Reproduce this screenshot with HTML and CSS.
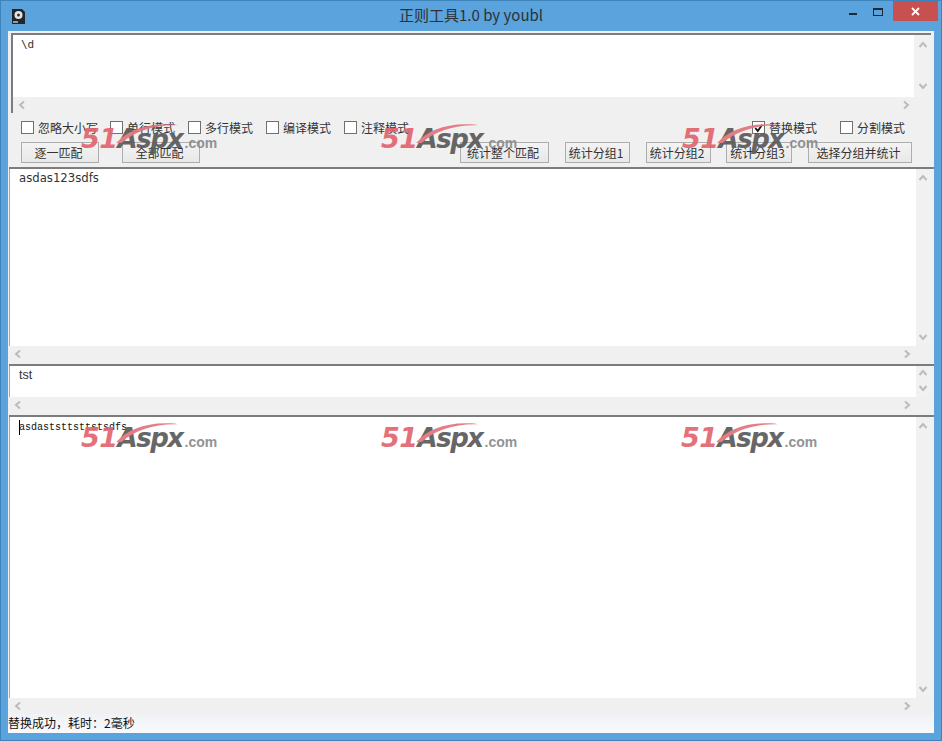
FILE: index.html
```html
<!DOCTYPE html>
<html lang="zh">
<head>
<meta charset="utf-8">
<title>正则工具1.0 by youbl</title>
<link rel="stylesheet" href="styles.css">
</head>
<body>
<svg class="defs" width="0" height="0" aria-hidden="true">
  <defs>
    <symbol id="chev" viewBox="0 0 10 10"><path d="M3 1.5 L7 5 L3 8.5" fill="none" stroke="#bcbcbc" stroke-width="2"/></symbol>
    <symbol id="sw" viewBox="0 0 80 26"><path d="M0 26C14 10 40 -1 76 2L80 3C50 2 24 11 7 26z" fill="#e2747c"/></symbol>
  </defs>
</svg>
<div class="window">
  <header class="titlebar">
    <svg class="appicon" viewBox="0 0 13 16"><path d="M0 1h10l3 3v12H0z" fill="#20262c"/><circle cx="6.5" cy="7" r="4" fill="#e4e4e4"/><circle cx="6.5" cy="7" r="1.5" fill="#333"/><rect x="1" y="13" width="5" height="2" fill="#999"/></svg>
    <h1 class="title">正则工具1.0 by youbl</h1>
    <div class="controls">
      <span class="min"></span>
      <span class="max"></span>
      <span class="close"><svg viewBox="0 0 9 9" width="9" height="9"><path d="M1 1l7 7M8 1l-7 7" stroke="#fff" stroke-width="1.8"/></svg></span>
    </div>
  </header>

  <main class="client">
    <section class="box box-regex">
      <div class="text mono-ish">\d</div>
      <div class="vbar">
        <svg class="arrow up"><use href="#chev"/></svg>
        <svg class="arrow down"><use href="#chev"/></svg>
      </div>
      <div class="hbar">
        <svg class="arrow left"><use href="#chev"/></svg>
        <svg class="arrow right"><use href="#chev"/></svg>
      </div>
    </section>

    <section class="options">
      <label class="opt o1"><i class="check"></i>忽略大小写</label>
      <label class="opt o2"><i class="check"></i>单行模式</label>
      <label class="opt o3"><i class="check"></i>多行模式</label>
      <label class="opt o4"><i class="check"></i>编译模式</label>
      <label class="opt o5"><i class="check"></i>注释模式</label>
      <label class="opt o6"><i class="check checked"><svg viewBox="0 0 12 12" width="12" height="12"><path d="M2.5 6l2.7 3.2L10 2.5" fill="none" stroke="#111" stroke-width="2"/></svg></i>替换模式</label>
      <label class="opt o7"><i class="check"></i>分割模式</label>
    </section>

    <section class="buttons">
      <button class="btn b1">逐一匹配</button>
      <button class="btn b2">全部匹配</button>
      <button class="btn b3">统计整个匹配</button>
      <button class="btn b4">统计分组1</button>
      <button class="btn b5">统计分组2</button>
      <button class="btn b6">统计分组3</button>
      <button class="btn b7">选择分组并统计</button>
    </section>

    <section class="box box-input">
      <div class="text sans-wide">asdas123sdfs</div>
      <div class="vbar">
        <svg class="arrow up"><use href="#chev"/></svg>
        <svg class="arrow down"><use href="#chev"/></svg>
      </div>
      <div class="hbar">
        <svg class="arrow left"><use href="#chev"/></svg>
        <svg class="arrow right"><use href="#chev"/></svg>
      </div>
    </section>

    <section class="box box-replace">
      <div class="text sans-plain">tst</div>
      <div class="vbar">
        <svg class="arrow up"><use href="#chev"/></svg>
        <svg class="arrow down"><use href="#chev"/></svg>
      </div>
      <div class="hbar">
        <svg class="arrow left"><use href="#chev"/></svg>
        <svg class="arrow right"><use href="#chev"/></svg>
      </div>
    </section>

    <section class="box box-result">
      <div class="text mono"><span class="caret"></span>asdaststtsttstsdfs</div>
      <div class="vbar">
        <svg class="arrow up"><use href="#chev"/></svg>
        <svg class="arrow down"><use href="#chev"/></svg>
      </div>
      <div class="hbar">
        <svg class="arrow left"><use href="#chev"/></svg>
        <svg class="arrow right"><use href="#chev"/></svg>
      </div>
    </section>

    <footer class="status">替换成功，耗时：2毫秒</footer>
  </main>

  <div class="wm w1"><svg class="swoosh"><use href="#sw"/></svg><b class="n">51</b><b class="a">Aspx</b><b class="c">.com</b></div>
  <div class="wm w2"><svg class="swoosh"><use href="#sw"/></svg><b class="n">51</b><b class="a">Aspx</b><b class="c">.com</b></div>
  <div class="wm w3"><svg class="swoosh"><use href="#sw"/></svg><b class="n">51</b><b class="a">Aspx</b><b class="c">.com</b></div>
  <div class="wm w4"><svg class="swoosh"><use href="#sw"/></svg><b class="n">51</b><b class="a">Aspx</b><b class="c">.com</b></div>
  <div class="wm w5"><svg class="swoosh"><use href="#sw"/></svg><b class="n">51</b><b class="a">Aspx</b><b class="c">.com</b></div>
  <div class="wm w6"><svg class="swoosh"><use href="#sw"/></svg><b class="n">51</b><b class="a">Aspx</b><b class="c">.com</b></div>
</div>
</body>
</html>
```
FILE: styles.css
```css
* { box-sizing: border-box; }
html, body { margin: 0; padding: 0; }
body { width: 942px; height: 741px; overflow: hidden; font-family: "Noto Sans CJK SC", "Liberation Sans", sans-serif; font-size: 12px; color: #222; }
.defs { position: absolute; }

.window { position: relative; width: 942px; height: 741px; background: #5ba3dc; border: 1px solid #3d84bd; display: flex; flex-direction: column; padding: 0 7px 7px 7px; }

.titlebar { height: 30px; flex: none; display: flex; align-items: flex-start; position: relative; }
.appicon { width: 13px; height: 16px; margin: 7px 0 0 4px; flex: none; }
.title { position: absolute; left: 0; right: 0; top: 4px; margin: 0; text-align: center; font-size: 15px; font-weight: 400; line-height: 20px; color: #2c3238; font-family: "Noto Sans CJK SC", "Liberation Sans", sans-serif; }
.controls { margin-left: auto; position: relative; width: 95px; height: 20px; margin-right: -4px; }
.min { position: absolute; left: 6px; top: 12px; width: 8px; height: 2px; background: #1d2a36; }
.max { position: absolute; left: 30px; top: 7px; width: 10px; height: 8px; border: 1px solid #1d2a36; border-top-width: 2px; }
.close { position: absolute; left: 50px; top: 0; width: 45px; height: 20px; background: #c75050; display: flex; align-items: center; justify-content: center; }

.client { flex: 1; display: flex; flex-direction: column; background: #f0f0f0; min-height: 0; }

.box { display: grid; grid-template-columns: 1fr 18px; grid-template-rows: 1fr 18px; background: #f0f0f0; border-top: 2px solid #7c7c7c; flex: none; }
.text { background: #fff; overflow: hidden; white-space: nowrap; grid-column: 1; grid-row: 1; }
.vbar { grid-column: 2; grid-row: 1; display: flex; flex-direction: column; justify-content: space-between; align-items: center; padding: 4px 4px 4px 0; background: #f1f1f1; }
.hbar { grid-column: 1 / span 2; grid-row: 2; display: flex; justify-content: space-between; align-items: center; padding: 0 22px 3px 4px; background: #f0f0f0; }
.arrow { width: 10px; height: 10px; flex: none; display: block; }
.arrow.up { transform: rotate(-90deg); }
.arrow.down { transform: rotate(90deg); }
.arrow.left { transform: rotate(180deg); }

.box-regex { height: 80px; margin: 2px 3px 0 3px; border-left: 2px solid #7c7c7c; grid-template-columns: 1fr 17px; grid-template-rows: 1fr 16px; }
.box-regex .vbar { padding: 5px 0 6px; }
.box-regex .hbar { padding: 0 20px 1px 4px; }
.box-input { height: 197px; margin-left: 1px; }
.box-replace { height: 51px; margin-left: 1px; }
.box-result { height: 299px; margin-left: 1px; grid-template-rows: 1fr 16px; }
.box-replace .vbar { padding-top: 2px; }
.box-result .hbar { padding-bottom: 1px; }
.box-input .text, .box-replace .text, .box-result .text { border-left: 1px solid #a8a8a8; }

.mono-ish { font-family: "DejaVu Sans Mono", monospace; font-size: 11px; line-height: 14px; padding: 3px 0 0 8px; color: #333; }
.sans-wide { font-family: "DejaVu Sans", sans-serif; font-size: 11.7px; line-height: 14px; padding: 2px 0 0 9px; color: #333; }
.sans-plain { font-family: "Liberation Sans", sans-serif; font-size: 12.5px; line-height: 14px; padding: 2px 0 0 9px; color: #333; }
.mono { font-family: "Liberation Mono", monospace; font-size: 10px; line-height: 12px; padding: 5px 0 0 9px; color: #111; position: relative; }
.caret { position: absolute; left: 9px; top: 3px; width: 1px; height: 15px; background: #000; }

.options { height: 29px; flex: none; display: flex; align-items: center; padding: 0 0 0 13px; }
.opt { display: flex; align-items: center; gap: 4px; font-size: 12px; color: #333; line-height: 16px; white-space: nowrap; }
.o1 { width: 89px; } .o2 { width: 78px; } .o3 { width: 78px; } .o4 { width: 78px; }
.o5 { width: 408px; } .o6 { width: 88px; }
.check { width: 13px; height: 13px; flex: none; background: #fff; border: 1px solid #707070; display: flex; align-items: center; justify-content: center; }

.buttons { height: 25px; flex: none; display: flex; padding: 0 0 0 13px; }
.btn { height: 21px; padding: 0 3px 0 0; background: linear-gradient(#f3f3f3, #e8e8e8); border: 1px solid #adadad; font: 12px/18px "Noto Sans CJK SC", "Liberation Sans", sans-serif; color: #333; flex: none; }
.b1 { width: 78px; margin-right: 23px; }
.b2 { width: 78px; margin-right: 260px; }
.b3 { width: 89px; margin-right: 16px; }
.b4 { width: 65px; margin-right: 16px; }
.b5 { width: 65px; margin-right: 15px; }
.b6 { width: 66px; margin-right: 16px; }
.b7 { width: 104px; }

.status { flex: 1; background: linear-gradient(#f0f2f6, #f8f9fc); font-size: 12px; line-height: 17px; color: #111; white-space: nowrap; font-family: "Noto Sans CJK SC", sans-serif; }

.wm { position: absolute; width: 140px; height: 30px; white-space: nowrap; font-family: "DejaVu Sans", sans-serif; font-style: italic; font-weight: 700; display: flex; align-items: baseline; pointer-events: none; opacity: .92; }
.wm b { display: block; }
.n { font-size: 27px; line-height: 30px; color: #e2646e; letter-spacing: -.5px; }
.a { font-size: 26px; line-height: 30px; color: #5a5a5a; letter-spacing: -1.5px; }
.c { font-size: 14px; line-height: 30px; color: #8a8a8a; font-family: "Liberation Sans", sans-serif; font-style: normal; margin-left: 2px; }
.swoosh { position: absolute; left: 34px; top: -1px; width: 64px; height: 20px; }
.w1 { left: 80px; top: 123px; } .w2 { left: 380px; top: 123px; } .w3 { left: 681px; top: 123px; }
.w4 { left: 80px; top: 422px; } .w5 { left: 380px; top: 422px; } .w6 { left: 680px; top: 422px; }
```
